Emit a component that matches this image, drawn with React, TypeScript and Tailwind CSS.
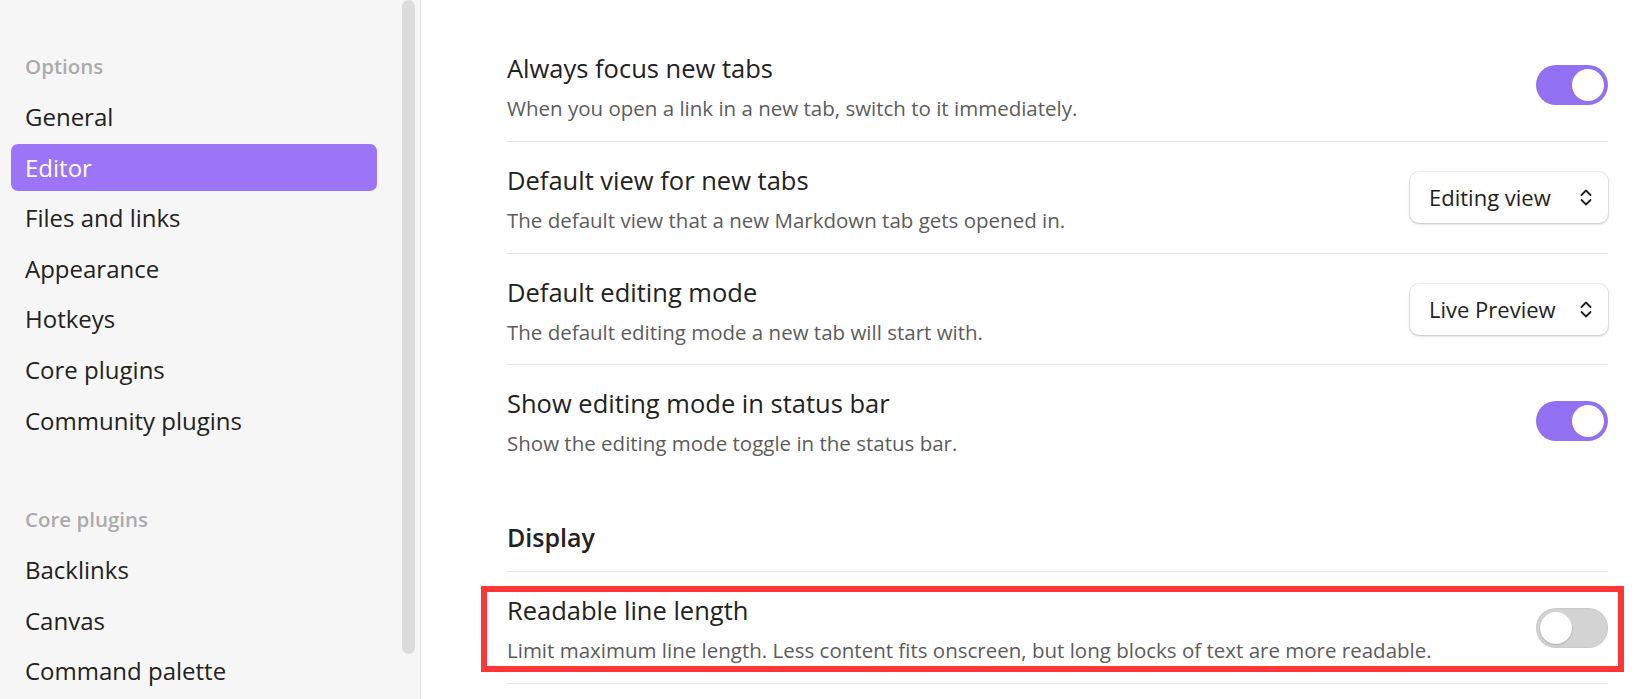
import React from "react";

type Row =
  | { kind: "toggle"; name: string; desc: string; on: boolean }
  | { kind: "select"; name: string; desc: string; value: string };

const rows: Row[] = [
  {
    kind: "toggle",
    name: "Always focus new tabs",
    desc: "When you open a link in a new tab, switch to it immediately.",
    on: true,
  },
  {
    kind: "select",
    name: "Default view for new tabs",
    desc: "The default view that a new Markdown tab gets opened in.",
    value: "Editing view",
  },
  {
    kind: "select",
    name: "Default editing mode",
    desc: "The default editing mode a new tab will start with.",
    value: "Live Preview",
  },
  {
    kind: "toggle",
    name: "Show editing mode in status bar",
    desc: "Show the editing mode toggle in the status bar.",
    on: true,
  },
];

const optionItems = ["General", "Editor", "Files and links", "Appearance", "Hotkeys", "Core plugins", "Community plugins"];
const pluginItems = ["Backlinks", "Canvas", "Command palette"];

function Toggle({ on }: { on: boolean }) {
  return (
    <div
      className={
        on
          ? "relative w-[72px] h-[40px] rounded-full bg-[#9270f2] shrink-0"
          : "relative w-[72px] h-[40px] rounded-full bg-[#d3d3d3] shadow-[inset_0_0_2px_rgba(0,0,0,0.15)] shrink-0"
      }
    >
      <div
        className={
          on
            ? "absolute top-[4px] right-[4px] w-[32px] h-[32px] rounded-full bg-white"
            : "absolute top-[4px] left-[4px] w-[32px] h-[32px] rounded-full bg-white shadow-[0_1px_2px_rgba(0,0,0,0.2)]"
        }
      />
    </div>
  );
}

function Select({ value }: { value: string }) {
  return (
    <div className="flex items-center justify-between w-[198px] h-[51px] rounded-[9px] bg-white pl-[19px] pr-[16px] shadow-[0_1px_3px_rgba(0,0,0,0.22),0_0_0_1px_rgba(0,0,0,0.05)] text-[22px] text-[#222]">
      <span>{value}</span>
      <svg width="12" height="17" viewBox="0 0 12 17" fill="none" stroke="#222" strokeWidth="1.8" strokeLinecap="round" strokeLinejoin="round">
        <polyline points="1.5,6 6,1.5 10.5,6" />
        <polyline points="1.5,11 6,15.5 10.5,11" />
      </svg>
    </div>
  );
}

function NavItem({ label, active }: { label: string; active?: boolean }) {
  return (
    <div
      className={
        active
          ? "h-[47px] mb-[3.6px] mx-[11px] w-[366px] pl-[14px] flex items-center rounded-[7px] bg-[#9b74f8] text-white text-[24px]"
          : "h-[47px] mb-[3.6px] mx-[11px] w-[366px] pl-[14px] flex items-center rounded-[7px] text-[#222] text-[24px]"
      }
    >
      {label}
    </div>
  );
}

export default function App() {
  return (
    <div className="flex w-full h-[699px] overflow-hidden bg-white font-['Open_Sans',sans-serif]">
      {/* sidebar */}
      <aside className="relative w-[421px] shrink-0 h-full bg-[#f6f6f6] border-r border-[#e3e3e3] pt-[44px]">
        <div className="h-[44px] leading-[44px] mb-[5.5px] pl-[25px] text-[20.5px] font-semibold text-[#ababab]">Options</div>
        {optionItems.map((it) => (
          <NavItem key={it} label={it} active={it === "Editor"} />
        ))}
        <div className="h-[44px] leading-[44px] mt-[52.5px] mb-[6px] pl-[25px] text-[20.5px] font-semibold text-[#ababab]">Core plugins</div>
        {pluginItems.map((it) => (
          <NavItem key={it} label={it} />
        ))}
        {/* scrollbar thumb */}
        <div className="absolute top-0 right-[5px] w-[13px] h-[654px] rounded-[7px] bg-[#dcdcdc]" />
      </aside>

      {/* main */}
      <main className="flex-1 h-full bg-white pl-[86px] pr-[29px] pt-[29.3px]">
        {rows.map((r, i) => (
          <div
            key={r.name}
            className={
              i === 0
                ? "h-[111.7px] flex items-center justify-between"
                : "h-[111.7px] flex items-center justify-between border-t border-[#e3e3e3]"
            }
          >
            <div className="flex flex-col">
              <div className="text-[25.5px] leading-[34px] text-[#222]">{r.name}</div>
              <div className="mt-[11px] text-[20.5px] leading-[24px] text-[#5c5c5c]">{r.desc}</div>
            </div>
            {r.kind === "toggle" ? <Toggle on={r.on} /> : <Select value={r.value} />}
          </div>
        ))}

        <div className="h-[95.3px] flex items-end pb-[17px]">
          <div className="text-[25px] leading-[34px] font-semibold text-[#222]">Display</div>
        </div>

        <div className="relative h-[112px] flex items-center justify-between border-t border-[#e3e3e3]">
          <div className="flex flex-col">
            <div className="text-[25.5px] leading-[34px] text-[#222]">Readable line length</div>
            <div className="mt-[11px] text-[20.5px] leading-[24px] text-[#5c5c5c]">
              Limit maximum line length. Less content fits onscreen, but long blocks of text are more readable.
            </div>
          </div>
          <Toggle on={false} />
          {/* annotation box */}
          <div className="absolute top-[14px] left-[-26px] right-[-16px] h-[86px] border-[6px] border-[#ff3636] pointer-events-none" />
        </div>
        <div className="border-t border-[#e3e3e3]" />
      </main>
    </div>
  );
}
